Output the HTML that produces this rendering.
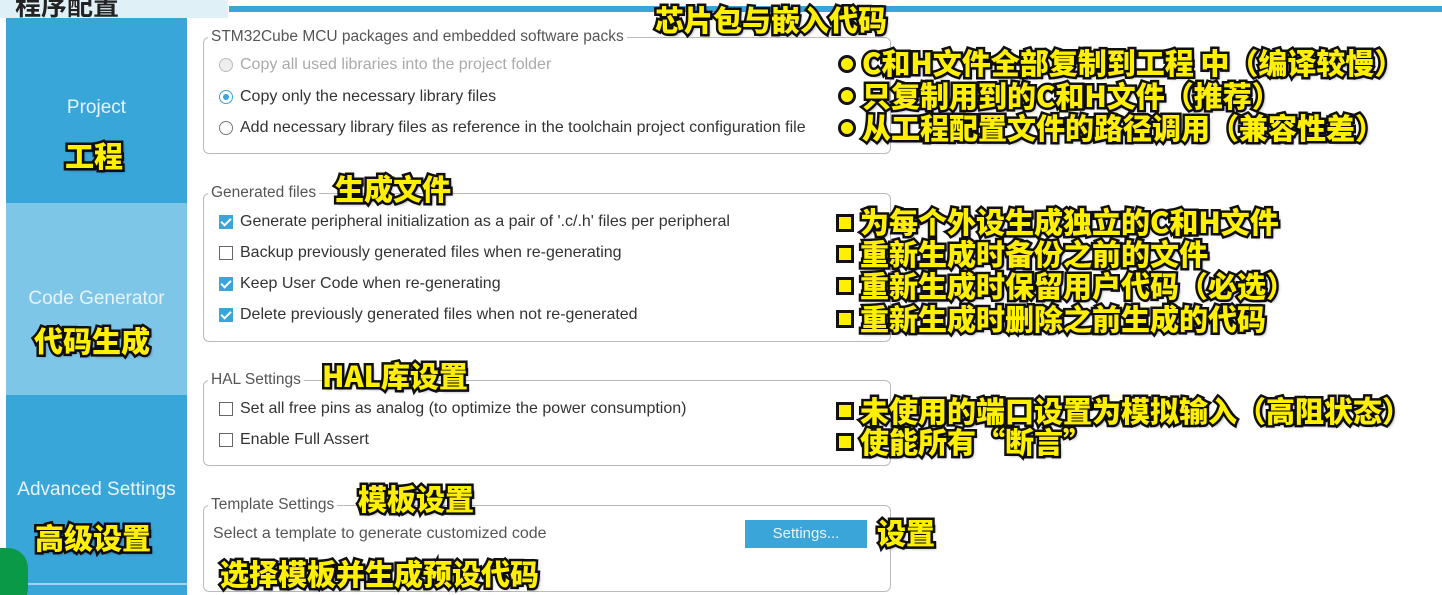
<!DOCTYPE html>
<html><head><meta charset="utf-8"><style>
html,body{margin:0;width:1442px;height:595px;overflow:hidden;}
body{background:#fff;position:relative;font-family:"Liberation Sans","Noto Sans CJK SC",sans-serif;}
.a{position:absolute;white-space:nowrap;}
.y{position:absolute;white-space:nowrap;font-family:"Noto Sans CJK SC","WenQuanYi Zen Hei",sans-serif;font-weight:900;color:#ffef00;font-size:29px;line-height:32px;-webkit-text-stroke:5px #111;paint-order:stroke fill;text-shadow:2px 2px 3px rgba(0,0,0,.5);letter-spacing:0px}
.b{position:absolute;width:12px;height:12px;background:#ffef00;border:3px solid #111;}
.side{position:absolute;left:6px;width:181px;}
.st{position:absolute;width:181px;text-align:center;color:#e8f4fb;font-size:19px;}
.fs{position:absolute;left:203px;width:686px;border:1.5px solid #bbb;border-radius:6px;}
.lg{position:absolute;background:#fff;color:#555;font-size:15.5px;padding:0 3px;left:4px;top:-10px;}
.t{position:absolute;font-size:16px;color:#333;}
.rb{position:absolute;width:12px;height:12px;border:1.5px solid #777;border-radius:50%;}
.cb{position:absolute;width:12px;height:12px;border:1.5px solid #666;background:#fff;}
.ck{background:#3aa5d8;border-color:#3aa5d8;}
.ck:after{content:"";position:absolute;left:3px;top:0px;width:4px;height:8px;border:solid #fff;border-width:0 2px 2px 0;transform:rotate(45deg);}
</style></head><body>
<div class="a" style="left:0;top:0;width:228px;height:18px;background:#dff0f7"></div>
<div class="a" style="left:15px;top:-14px;font-size:26px;font-weight:bold;color:#222;font-family:'Noto Sans CJK SC',sans-serif">程序配置</div>
<div class="a" style="left:229px;top:6px;width:1213px;height:6px;background:#3aa5d8"></div>
<div class="side" style="top:18px;height:185px;background:#39a6d9"></div>
<div class="side" style="top:203px;height:192px;background:#7ec6e8"></div>
<div class="side" style="top:395px;height:188px;background:#39a6d9"></div>
<div class="side" style="top:583px;height:2px;background:#9fd2ec"></div>
<div class="side" style="top:585px;height:10px;background:#39a6d9"></div>
<div class="a" style="left:-20px;top:548px;width:48px;height:60px;border-radius:20px;background:#0a9a47"></div>
<div class="st" style="left:6px;top:97px">Project</div>
<div class="st" style="left:6px;top:288px">Code Generator</div>
<div class="st" style="left:6px;top:479px">Advanced Settings</div>
<div class="y" style="left:65px;top:139px">工程</div>
<div class="y" style="left:34px;top:324px">代码生成</div>
<div class="y" style="left:35px;top:521px">高级设置</div>

<div class="fs" style="top:37px;height:115px"><div class="lg">STM32Cube MCU packages and embedded software packs</div></div>
<div class="rb" style="left:219px;top:58px;border-color:#bbb;background:#eee"></div><div class="t" style="left:240px;top:56px;color:#aaa">Copy all used libraries into the project folder</div>
<div class="rb" style="left:219px;top:90px;border-color:#3aa5d8"><div style="position:absolute;left:3px;top:3px;width:6px;height:6px;border-radius:50%;background:#3aa5d8"></div></div><div class="t" style="left:240px;top:88px">Copy only the necessary library files</div>
<div class="rb" style="left:219px;top:121px"></div><div class="t" style="left:240px;top:119px">Add necessary library files as reference in the toolchain project configuration file</div>

<div class="fs" style="top:193px;height:147px"><div class="lg">Generated files</div></div>
<div class="cb ck" style="left:219px;top:215px"></div><div class="t" style="left:240px;top:213px">Generate peripheral initialization as a pair of '.c/.h' files per peripheral</div>
<div class="cb" style="left:219px;top:246px"></div><div class="t" style="left:240px;top:244px">Backup previously generated files when re-generating</div>
<div class="cb ck" style="left:219px;top:277px"></div><div class="t" style="left:240px;top:275px">Keep User Code when re-generating</div>
<div class="cb ck" style="left:219px;top:308px"></div><div class="t" style="left:240px;top:306px">Delete previously generated files when not re-generated</div>

<div class="fs" style="top:380px;height:84px"><div class="lg">HAL Settings</div></div>
<div class="cb" style="left:219px;top:402px"></div><div class="t" style="left:240px;top:400px">Set all free pins as analog (to optimize the power consumption)</div>
<div class="cb" style="left:219px;top:433px"></div><div class="t" style="left:240px;top:431px">Enable Full Assert</div>

<div class="fs" style="top:505px;height:85px"><div class="lg">Template Settings</div></div>
<div class="t" style="left:213px;top:525px;color:#555">Select a template to generate customized code</div>
<div class="a" style="left:745px;top:520px;width:122px;height:28px;background:#3aa5d8;color:#e8f4fb;font-size:15px;text-align:center;line-height:28px">Settings...</div>

<div class="y" style="left:655px;top:3px">芯片包与嵌入代码</div>
<div class="b" style="left:838px;top:55px;border-radius:50%"></div><div class="y" style="left:862px;top:46px">C和H文件全部复制到工程 中（编译较慢）</div>
<div class="b" style="left:838px;top:87px;border-radius:50%"></div><div class="y" style="left:862px;top:79px">只复制用到的C和H文件（推荐）</div>
<div class="b" style="left:838px;top:119px;border-radius:50%"></div><div class="y" style="left:862px;top:111px">从工程配置文件的路径调用（兼容性差）</div>
<div class="y" style="left:335px;top:172px">生成文件</div>
<div class="b" style="left:836px;top:214px"></div><div class="y" style="left:860px;top:205px">为每个外设生成独立的C和H文件</div>
<div class="b" style="left:836px;top:245px"></div><div class="y" style="left:860px;top:237px">重新生成时备份之前的文件</div>
<div class="b" style="left:836px;top:277px"></div><div class="y" style="left:860px;top:269px">重新生成时保留用户代码（必选）</div>
<div class="b" style="left:836px;top:310px"></div><div class="y" style="left:860px;top:302px">重新生成时删除之前生成的代码</div>
<div class="y" style="left:322px;top:359px">HAL库设置</div>
<div class="b" style="left:836px;top:402px"></div><div class="y" style="left:860px;top:394px">未使用的端口设置为模拟输入（高阻状态）</div>
<div class="b" style="left:836px;top:433px"></div><div class="y" style="left:860px;top:425px">使能所有“断言”</div>
<div class="y" style="left:358px;top:482px">模板设置</div>
<div class="y" style="left:877px;top:516px">设置</div>
<div class="y" style="left:220px;top:557px">选择模板并生成预设代码</div>
</body></html>
